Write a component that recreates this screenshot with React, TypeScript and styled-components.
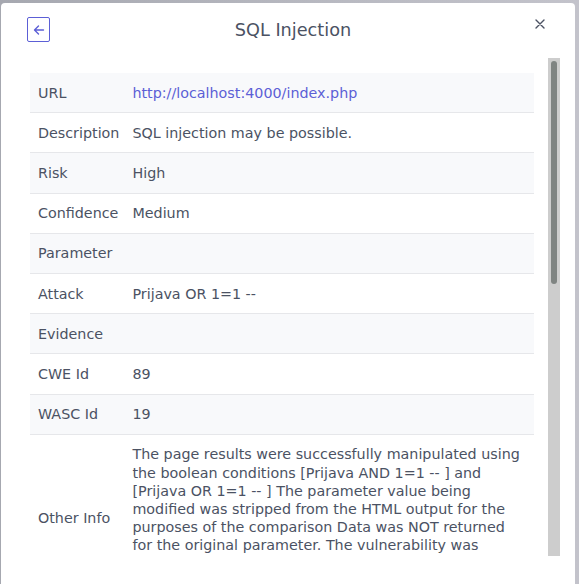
import styled, { createGlobalStyle } from "styled-components";

const GlobalStyle = createGlobalStyle`
  html, body {
    margin: 0;
    padding: 0;
    height: 100%;
    overflow: hidden;
  }
  body {
    font-family: "DejaVu Sans", "Noto Sans", sans-serif;
    background: #aeb0b8;
  }
`;

// Greyed out page behind the dialog
const Backdrop = styled.div`
  width: 579px;
  height: 584px;
  padding: 3px 4px 0 1px;
  box-sizing: border-box;
  background: linear-gradient(90deg, #a6a8b0 0%, #b9bac2 60%, #c3c3cb 100%);
`;

const Modal = styled.div`
  background: #ffffff;
  border-radius: 4px 4px 0 0;
  height: 600px;
  display: flex;
  flex-direction: column;
`;

const Header = styled.div`
  display: grid;
  grid-template-columns: 48px 1fr 48px;
  align-items: start;
  box-sizing: border-box;
  height: 55px;
  padding: 14px 16px 0 26px;
`;

const BackButton = styled.button`
  width: 23px;
  height: 25px;
  border: 1px solid #5c5fd6;
  border-radius: 2px;
  background: #ffffff;
  display: flex;
  align-items: center;
  justify-content: center;
  padding: 0;
  color: #5c5fd6;
  cursor: pointer;
`;

const Title = styled.h2`
  margin: 1px 0 0;
  text-align: center;
  font-size: 17.7px;
  line-height: 24px;
  font-weight: 400;
  color: #4b5263;
`;

const CloseButton = styled.button`
  justify-self: end;
  margin: -2px 10px 0 0;
  border: none;
  background: none;
  padding: 4px;
  color: #4b5263;
  display: flex;
  cursor: pointer;
`;

// Body: the visible part of the table plus its scrollbar
const Body = styled.div`
  display: flex;
  height: 498px;
  margin: 0 15px 0 29px;
`;

const Viewport = styled.div`
  flex: 1;
  overflow: hidden;
`;

const ScrollTrack = styled.div`
  width: 12px;
  flex-shrink: 0;
  background: #cdcdcd;
  padding: 3px;
  box-sizing: border-box;
`;

const ScrollThumb = styled.div<{ $size: number }>`
  height: ${(p) => p.$size}px;
  border-radius: 3px;
  background: #7f8482;
`;

const Table = styled.table`
  width: 504px;
  margin-top: 15px;
  border-collapse: collapse;
  font-size: 14.3px;
  color: #4b5263;
`;

const Row = styled.tr<{ $striped: boolean }>`
  background: ${(p) => (p.$striped ? "#f8f9fb" : "#ffffff")};
  border-bottom: 1px solid #e6e7ea;
`;

const Label = styled.td`
  padding: 10.5px 13px 10.5px 8px;
  line-height: 18.2px;
  white-space: nowrap;
  vertical-align: middle;
`;

const Value = styled.td`
  padding: 10.5px 8px 10.5px 0;
  line-height: 18.2px;
  vertical-align: middle;
  word-break: break-word;
`;

const Link = styled.a`
  color: #5c5fd6;
  text-decoration: none;
`;

const rows: { label: string; value: string; link?: boolean }[] = [
  { label: "URL", value: "http://localhost:4000/index.php", link: true },
  { label: "Description", value: "SQL injection may be possible." },
  { label: "Risk", value: "High" },
  { label: "Confidence", value: "Medium" },
  { label: "Parameter", value: "" },
  { label: "Attack", value: "Prijava OR 1=1 --" },
  { label: "Evidence", value: "" },
  { label: "CWE Id", value: "89" },
  { label: "WASC Id", value: "19" },
  {
    label: "Other Info",
    value:
      "The page results were successfully manipulated using the boolean conditions [Prijava AND 1=1 -- ] and [Prijava OR 1=1 -- ] The parameter value being modified was stripped from the HTML output for the purposes of the comparison Data was NOT returned for the original parameter. The vulnerability was detected by successfully retrieving more data than originally returned, by manipulating the parameter",
  },
  {
    label: "Solution",
    value:
      "Do not trust client side input, even if there is client side validation in place. In general, type check all data on the server side. If the application uses JDBC, use PreparedStatement or CallableStatement, with parameters passed by '?'. If the application uses ASP, use ADO Command Objects with strong type checking and parameterized queries. If database Stored Procedures can be used, use them. Do *not* concatenate strings into queries in the stored procedure, or use 'exec', 'exec immediate', or equivalent functionality! Do not create dynamic SQL queries using simple string concatenation. Escape all data received from the client. Apply an 'allow list' of allowed characters, or a 'deny list' of disallowed characters in user input. Apply the principle of least privilege by using the least privileged database user possible.",
  },
  {
    label: "Reference",
    value:
      "https://cheatsheetseries.owasp.org/cheatsheets/SQL_Injection_Prevention_Cheat_Sheet.html",
    link: true,
  },
];

const App = (): JSX.Element => {
  return (
    <>
      <GlobalStyle />
      <Backdrop>
        <Modal>
          <Header>
            <BackButton aria-label="Back">
              <svg width="12" height="12" viewBox="0 0 12 12" fill="none">
                <path
                  d="M10.5 6H1.8M5.5 2L1.5 6l4 4"
                  stroke="currentColor"
                  strokeWidth="1.4"
                  strokeLinecap="round"
                  strokeLinejoin="round"
                />
              </svg>
            </BackButton>
            <Title>SQL Injection</Title>
            <CloseButton aria-label="Close">
              <svg width="10" height="10" viewBox="0 0 10 10">
                <path
                  d="M1 1l8 8M9 1L1 9"
                  stroke="currentColor"
                  strokeWidth="1.4"
                  strokeLinecap="round"
                />
              </svg>
            </CloseButton>
          </Header>
          <Body>
            <Viewport>
              <Table>
                <tbody>
                  {rows.map((row, i) => (
                    <Row key={row.label} $striped={i % 2 === 0}>
                      <Label>{row.label}</Label>
                      <Value>
                        {row.link ? (
                          <Link href="#">{row.value}</Link>
                        ) : (
                          row.value
                        )}
                      </Value>
                    </Row>
                  ))}
                </tbody>
              </Table>
            </Viewport>
            <ScrollTrack>
              <ScrollThumb $size={223} />
            </ScrollTrack>
          </Body>
        </Modal>
      </Backdrop>
    </>
  );
};

export default App;
